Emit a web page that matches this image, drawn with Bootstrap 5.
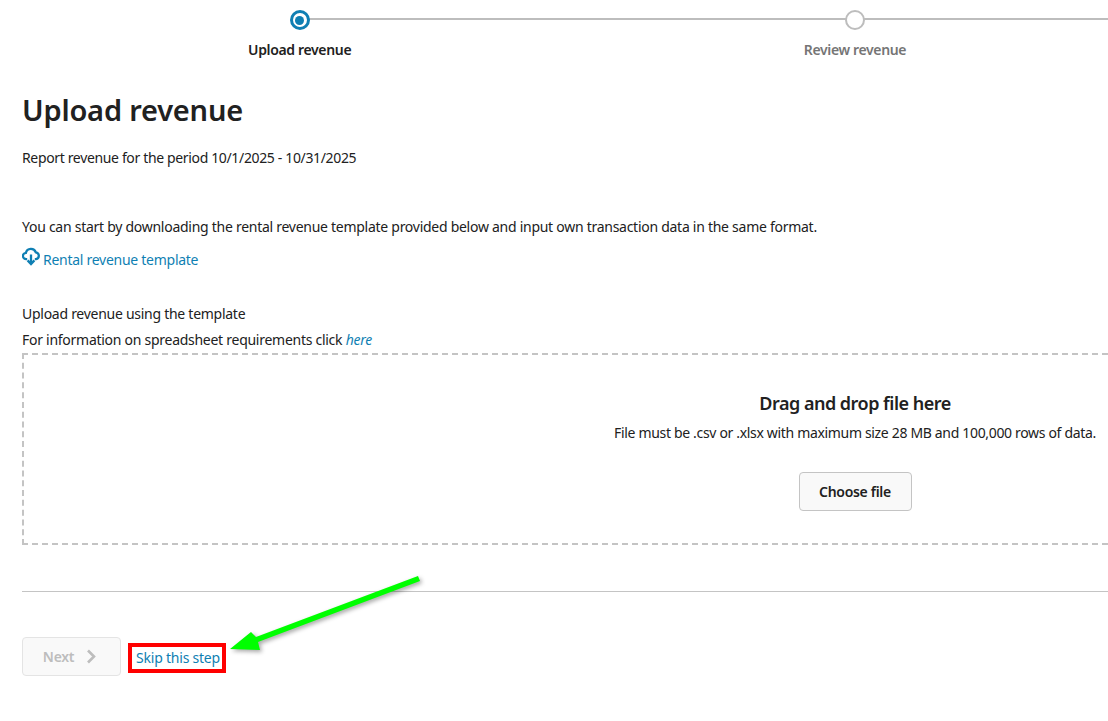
<!DOCTYPE html>
<html lang="en">
<head>
<meta charset="utf-8">
<title>Upload revenue</title>
<link href="https://cdn.jsdelivr.net/npm/bootstrap@5.3.0/dist/css/bootstrap.min.css" rel="stylesheet">
<style>
html,body{overflow:hidden;height:721px;background:#fff}
body{font-family:"Noto Sans","Open Sans",sans-serif;font-size:14px;letter-spacing:-.27px;color:#212121;position:relative}
.pg{width:1666px;margin-left:22px}
.stepper{height:66px;margin-left:-22px;width:1688px;padding-left:22px}
.stp{width:33.333%;padding-top:10px;position:relative;text-align:center}
.dot{width:20px;height:20px;border-radius:50%;border:2px solid #bdbdbd;background:#fff;position:relative;z-index:1;margin:0 auto;display:flex;align-items:center;justify-content:center}
.dot.on{border:3px solid #0f7fb3}
.dot.on i{display:block;width:9px;height:9px;border-radius:50%;background:#0f7fb3}
.ln{position:absolute;top:18px;left:50%;width:100%;height:2px;background:#bdbdbd}
.lab{font-size:14px;font-weight:600;margin-top:9px;line-height:21px;color:#212121;letter-spacing:-.35px}
.lab.off{color:#757575}
h1.ttl{font-size:29px;font-weight:600;line-height:40px;margin:24px 0 0;color:#212121;letter-spacing:-.2px}
.ptxt{line-height:20px;margin:0}
.gap-a{margin-top:18px;letter-spacing:-.35px}
.gap-b{margin-top:49px}
.gap-c{margin-top:34px}
.gap-d{margin-top:6px}
a.lk{color:#0f7fb3;text-decoration:none}
.tpl{margin-top:11px;height:22px;gap:3px}
.tpl svg{position:relative;top:-3px}
.zone{height:192px;border:2px dashed #c4c4c4;margin-top:3px;padding-top:36px}
.zone h2{font-size:18px;font-weight:600;line-height:24px;margin:0 0 8px;letter-spacing:-.5px}
.zone .ptxt{letter-spacing:-.33px}
.btn-pick{background:#f9f9f9;border:1px solid #c4c4c4;border-radius:4px;color:#212121;font-size:14px;font-weight:600;letter-spacing:-.3px;width:113px;height:39px;padding:0;margin-top:29px}
.rule{height:1px;background:#c4c4c4;margin:46px 0 45px}
.btn-nx{--bs-btn-disabled-bg:#f9f9f9;--bs-btn-disabled-border-color:#e4e4e4;--bs-btn-disabled-color:#bdbdbd;--bs-btn-disabled-opacity:1;border-radius:4px;font-size:14px;font-weight:600;letter-spacing:-.3px;width:99px;height:39px;padding:0 3px 0 0;gap:12px}
.skip{outline:4px solid #f00;outline-offset:-4px;width:98px;height:30px;margin-left:7px;margin-top:2px;padding-left:2px;line-height:29px;text-align:center;display:block;letter-spacing:-.22px}
.arr{position:absolute;left:215px;top:570px;filter:drop-shadow(2px 2px 2px rgba(0,0,0,.35))}
</style>
</head>
<body>
<div class="pg">
  <div class="stepper d-flex">
    <div class="stp"><div class="ln"></div><div class="dot on"><i></i></div><div class="lab">Upload revenue</div></div>
    <div class="stp"><div class="ln"></div><div class="dot"></div><div class="lab off">Review revenue</div></div>
    <div class="stp"><div class="dot"></div></div>
  </div>
  <h1 class="ttl">Upload revenue</h1>
  <p class="ptxt gap-a">Report revenue for the period 10/1/2025 - 10/31/2025</p>
  <p class="ptxt gap-b">You can start by downloading the rental revenue template provided below and input own transaction data in the same format.</p>
  <a href="#" class="lk d-flex align-items-center tpl">
    <svg width="18" height="19" viewBox="0 0 18 19" fill="none" stroke="#0f7fb3" stroke-width="2.3"><path d="M5.2 12.2H4.4A3.2 3.2 0 0 1 3.9 5.8 5.2 5.2 0 0 1 13.8 5.3 3.5 3.5 0 0 1 14 12.2H12.8"/><path d="M9 7.5V17M5.6 13.4 9 17l3.4-3.6"/></svg>
    <span>Rental revenue template</span>
  </a>
  <p class="ptxt gap-c">Upload revenue using the template</p>
  <p class="ptxt gap-d">For information on spreadsheet requirements click <a href="#" class="lk fst-italic">here</a></p>
  <div class="zone d-flex flex-column align-items-center justify-content-start">
    <h2>Drag and drop file here</h2>
    <div class="ptxt">File must be .csv or .xlsx with maximum size 28 MB and 100,000 rows of data.</div>
    <button type="button" class="btn btn-pick">Choose file</button>
  </div>
  <div class="rule"></div>
  <div class="d-flex align-items-center">
    <button type="button" class="btn btn-nx d-flex align-items-center justify-content-center" disabled>Next
      <svg width="11" height="15" viewBox="0 0 11 15" fill="none" stroke="#bdbdbd" stroke-width="2.6"><path d="M2 1.5l6 6-6 6"/></svg>
    </button>
    <a href="#" class="lk skip">Skip this step</a>
  </div>
</div>
<svg class="arr" width="215" height="95" viewBox="0 0 215 95"><path d="M205 11 43 72 45 80 15 79 36 62 41 67 203 6z" fill="#00ff00"/></svg>
</body>
</html>
